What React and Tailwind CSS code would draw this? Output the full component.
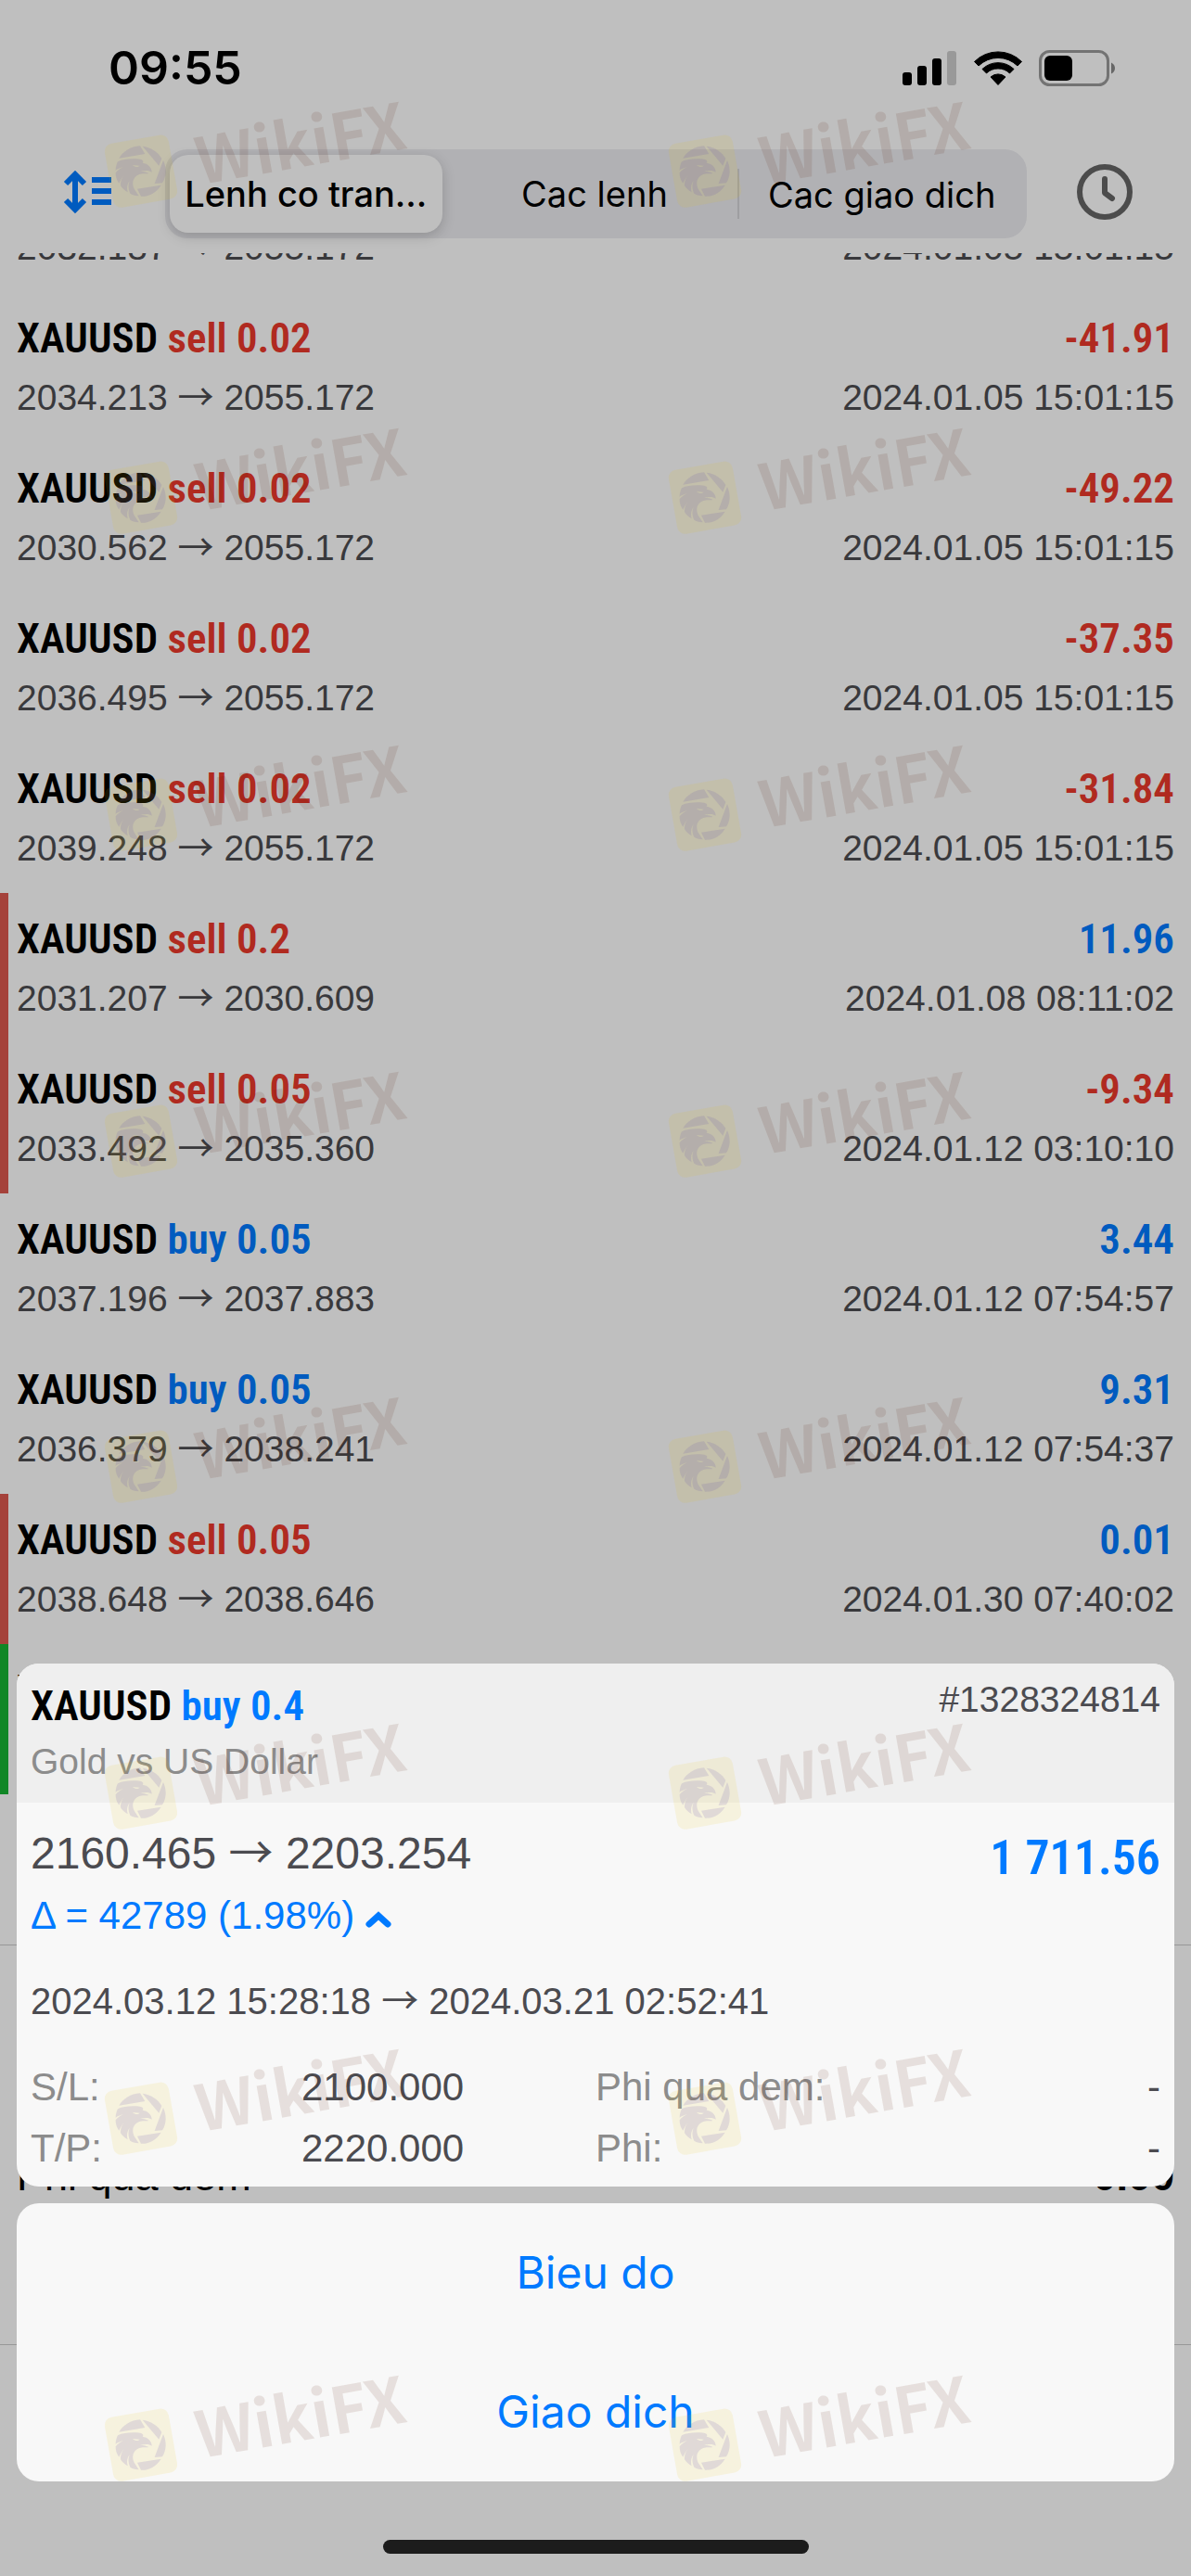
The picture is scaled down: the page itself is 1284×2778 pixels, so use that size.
import clsx from 'clsx';

const deals = [
  { side: 'sell', volume: '0.02', open: '2032.187', close: '2055.172', profit: '-45.97', time: '2024.01.05 15:01:15' },
  { side: 'sell', volume: '0.02', open: '2034.213', close: '2055.172', profit: '-41.91', time: '2024.01.05 15:01:15' },
  { side: 'sell', volume: '0.02', open: '2030.562', close: '2055.172', profit: '-49.22', time: '2024.01.05 15:01:15' },
  { side: 'sell', volume: '0.02', open: '2036.495', close: '2055.172', profit: '-37.35', time: '2024.01.05 15:01:15' },
  { side: 'sell', volume: '0.02', open: '2039.248', close: '2055.172', profit: '-31.84', time: '2024.01.05 15:01:15' },
  { side: 'sell', volume: '0.2', open: '2031.207', close: '2030.609', profit: '11.96', time: '2024.01.08 08:11:02', mark: 'sl' },
  { side: 'sell', volume: '0.05', open: '2033.492', close: '2035.360', profit: '-9.34', time: '2024.01.12 03:10:10', mark: 'sl' },
  { side: 'buy', volume: '0.05', open: '2037.196', close: '2037.883', profit: '3.44', time: '2024.01.12 07:54:57' },
  { side: 'buy', volume: '0.05', open: '2036.379', close: '2038.241', profit: '9.31', time: '2024.01.12 07:54:37' },
  { side: 'sell', volume: '0.05', open: '2038.648', close: '2038.646', profit: '0.01', time: '2024.01.30 07:40:02', mark: 'sl' },
  { side: 'buy', volume: '0.4', open: '2160.465', close: '2203.254', profit: '1 711.56', time: '2024.03.21 02:52:41', mark: 'tp' },
];

const watermarkRows = [
  'top-[143px]',
  'top-[495px]',
  'top-[837px]',
  'top-[1189px]',
  'top-[1540px]',
  'top-[1892px]',
  'top-[2243px]',
  'top-[2595px]',
];

function Arrow() {
  return <span className="font-['Noto_Sans_CJK_SC',sans-serif] leading-none">→</span>;
}

function StatusBar() {
  return (
    <div className="flex h-[146px] items-center justify-between pr-[82px] pl-[117px]">
      <span className="font-['Inter',sans-serif] text-[50px] font-semibold">09:55</span>
      <svg width="229" height="39" viewBox="0 0 229 39" aria-hidden="true">
        <rect x="0" y="24" width="10" height="14" rx="3" />
        <rect x="16" y="17" width="10" height="21" rx="3" />
        <rect x="32" y="9" width="10" height="29" rx="3" />
        <rect x="48" y="1" width="10" height="37" rx="3" fill="#cdcdcd" />
        {/* wifi */}
        <path d="M77.500 12.500 A36 36 0 0 1 128.500 12.500 L124 17 A30 30 0 0 0 82 17 Z" stroke="#000" strokeWidth="1" strokeLinejoin="round" />
        <path d="M86 20.500 A24.500 24.500 0 0 1 120 20.500 L115.500 25 A18 18 0 0 0 90.500 25 Z" stroke="#000" strokeWidth="1" strokeLinejoin="round" />
        <path d="M95 29 A12 12 0 0 1 111 29 L103 37.500 Z" stroke="#000" strokeWidth="1" strokeLinejoin="round" />
        {/* battery */}
        <rect x="148.500" y="1.500" width="73" height="36" rx="10" fill="none" stroke="#9a9a9a" strokeWidth="3" />
        <rect x="153" y="6" width="30" height="27" rx="6" />
        <path d="M225 13.500 Q229 15.500 229 19.500 Q229 23.500 225 25.500 Z" fill="#8a8a8a" />
      </svg>
    </div>
  );
}

function Toolbar() {
  return (
    <div className="flex items-center pt-[15px] pr-[63px] pb-4 pl-[68px]">
      <button type="button" aria-label="Sort" className="mr-[57px] pb-1">
        <svg width="53" height="48" viewBox="0 0 53 48">
          <path d="M13 5 V43 M3 15 L13 5 L23 15 M3 33 L13 43 L23 33" fill="none" stroke="#007aff" strokeWidth="6" />
          <path d="M31 8 H52 V14 H31 Z M31 20 H52 V26 H31 Z M31 32 H52 V38 H31 Z" fill="#007aff" />
        </svg>
      </button>
      <div className="grid h-24 flex-1 grid-cols-3 items-center rounded-[24px] bg-[#ececf0] pr-[3px] font-['Inter',sans-serif] text-[38px]">
        <button
          type="button"
          className="mr-[10px] ml-[5px] h-[84px] rounded-[20px] bg-white font-medium shadow-[0_4px_14px_rgba(0,0,0,0.18)]"
        >
          Lenh co tran...
        </button>
        <button type="button">Cac lenh</button>
        <button type="button" className="h-[54px] border-l-2 border-[#d3d3d7]">
          Cac giao dich
        </button>
      </div>
      <button type="button" aria-label="Period" className="ml-[54px] pb-1">
        <svg width="60" height="60" viewBox="0 0 60 60" fill="none" stroke="#666" strokeWidth="6">
          <circle cx="30" cy="30" r="27" />
          <path d="M30 16 V31 L38 37" strokeLinecap="round" strokeLinejoin="round" />
        </svg>
      </button>
    </div>
  );
}

function DealTitle({ side, volume }) {
  return (
    <span className="font-['Roboto_Condensed',sans-serif] text-[45px] leading-14 font-semibold">
      XAUUSD <span className={side === 'sell' ? 'text-[#eb382b]' : 'text-[#007aff]'}>{side} {volume}</span>
    </span>
  );
}

function DealRow({ deal }) {
  return (
    <li
      className={clsx(
        'flex h-[162px] flex-col gap-2 border-l-[9px] pt-[22px] pr-[18px] pl-[9px]',
        !deal.mark && 'border-transparent',
        deal.mark === 'sl' && 'border-[#dc594f]',
        deal.mark === 'tp' && 'border-[#17b533]',
      )}
    >
      <div className="flex justify-between">
        <DealTitle side={deal.side} volume={deal.volume} />
        <span
          className={clsx(
            "font-['Roboto_Condensed',sans-serif] text-[45px] leading-14 font-semibold",
            deal.profit.startsWith('-') ? 'text-[#eb382b]' : 'text-[#007aff]',
          )}
        >
          {deal.profit}
        </span>
      </div>
      <div className="flex justify-between text-[39px] leading-14 text-[#4d4d51]">
        <span>{deal.open} <Arrow /> {deal.close}</span>
        <span>{deal.time}</span>
      </div>
    </li>
  );
}

function DetailSheet() {
  return (
    <div className="flex flex-col px-[18px] pb-6">
      <section className="overflow-hidden rounded-[24px] bg-[#f8f8f8] text-[#4b4b50]">
        <header className="flex h-[150px] justify-between bg-[#efefef] px-[15px] pt-[18px]">
          <div className="flex flex-col gap-1 text-black">
            <DealTitle side="buy" volume="0.4" />
            <span className="text-[39px] leading-14 text-[#8c8c8c]">Gold vs US Dollar</span>
          </div>
          <span className="text-[39px] leading-[42px]">#1328324814</span>
        </header>
        <div className="flex flex-col px-[15px] pt-[26px] pb-2">
          <div className="flex justify-between">
            <span className="text-[48px] leading-14">2160.465 <Arrow /> 2203.254</span>
            <span className="pt-1 font-['Roboto_Condensed',sans-serif] text-[52px] leading-15 font-semibold text-[#007aff]">
              1 711.56
            </span>
          </div>
          <div className="flex items-center gap-3 text-[42px] leading-16 text-[#007aff]">
            <span>Δ = 42789 (1.98%)</span>
            <svg width="28" height="18" viewBox="0 0 28 18" className="mt-2" aria-hidden="true">
              <path d="M4 14 L14 5 L24 14" fill="none" stroke="currentColor" strokeWidth="7" strokeLinecap="round" />
            </svg>
          </div>
          <p className="pt-8 text-[40px] leading-14">
            2024.03.12 15:28:18 <Arrow /> 2024.03.21 02:52:41
          </p>
          <dl className="grid grid-cols-2 pt-8 text-[42px] leading-[66px]">
            <div className="flex">
              <dt className="w-[292px] text-[#8c8c8c]">S/L:</dt>
              <dd>2100.000</dd>
            </div>
            <div className="flex justify-between">
              <dt className="text-[#8c8c8c]">Phi qua dem:</dt>
              <dd>-</dd>
            </div>
            <div className="flex">
              <dt className="w-[292px] text-[#8c8c8c]">T/P:</dt>
              <dd>2220.000</dd>
            </div>
            <div className="flex justify-between">
              <dt className="text-[#8c8c8c]">Phi:</dt>
              <dd>-</dd>
            </div>
          </dl>
        </div>
      </section>
      <div className="mt-[18px] flex flex-col rounded-[24px] bg-[#f8f8f8] font-['Inter',sans-serif] text-[48px] text-[#007aff]">
        <button type="button" className="h-[150px]">Bieu do</button>
        <button type="button" className="h-[150px]">Giao dich</button>
      </div>
      <div className="mt-[63px] h-[15px] w-[459px] self-center rounded-full bg-[#1c1c1c]" />
    </div>
  );
}

function Watermark({ className }) {
  return (
    <div className={clsx('absolute', className)}>
      <svg width="84" height="84" viewBox="-5 134 252 252" aria-hidden="true">
        <rect x="16" y="154" width="210" height="210" rx="26" transform="rotate(-10 121 259)" fill="#f0c800" fillOpacity="0.1" />
        <g fill="#5a4ab0" fillOpacity="0.14" fillRule="evenodd">
          <path d="M50 217 C62 196 88 178 118 177 L134 203 Z" />
          <path d="M126 178 C150 180 178 198 188 218 L179 241 Z" />
          <path d="M193 224 C204 248 204 275 190 297 L165 299 Z" />
          <path d="M186 304 C170 330 145 342 121 340 L109 316 Z" />
          <path d="M46 228 C66 218 94 218 118 220 C128 222 130 228 126 232 C142 234 156 246 156 262 C148 255 134 256 118 259 C130 260 140 262 146 266 C136 268 126 264 114 270 C94 278 90 300 100 318 L114 339 C102 338 92 335 86 331 C79 316 79 302 84 290 C76 300 74 314 78 327 C68 321 60 314 55 306 C54 294 58 282 66 272 C59 280 54 290 50 298 C42 288 39 276 39 264 C46 256 54 250 64 246 C54 248 44 252 39 256 C39 246 42 236 46 228 Z M94 239 L117 241 C112 247 102 247 94 239 Z" />
        </g>
      </svg>
      <span className="absolute top-[-27px] left-[99px] -rotate-10 font-['Noto_Sans_CJK_SC',sans-serif] text-[69px] leading-none font-bold text-[#501400]/11">
        WikiFX
      </span>
    </div>
  );
}

export default function App() {
  return (
    <div className="relative flex h-screen flex-col overflow-hidden bg-white font-['Liberation_Sans',sans-serif] text-black">
      <header className="relative z-10 bg-white">
        <StatusBar />
        <Toolbar />
      </header>

      {/* scrolled so the first deal slides under the header */}
      <main className="-mt-[120px]">
        <ul>
          {deals.map((deal) => (
            <DealRow key={deal.open} deal={deal} />
          ))}
        </ul>
        <div className="mt-[162px] h-[432px] border-y border-[#cacaca] px-[18px] pt-[219px]">
          <div className="flex justify-between text-[45px] leading-[60px]">
            <span>Phi qua dem</span>
            <span className="font-bold">0.00</span>
          </div>
        </div>
      </main>

      {/* dimmed backdrop with the sheet docked to the bottom */}
      <div className="absolute inset-0 z-20 flex flex-col justify-end bg-black/25">
        <DetailSheet />
      </div>

      <div className="pointer-events-none absolute inset-0 z-30">
        {watermarkRows.map((top) => (
          <div key={top}>
            <Watermark className={clsx(top, 'left-[110px]')} />
            <Watermark className={clsx(top, 'left-[718px]')} />
          </div>
        ))}
      </div>
    </div>
  );
}
